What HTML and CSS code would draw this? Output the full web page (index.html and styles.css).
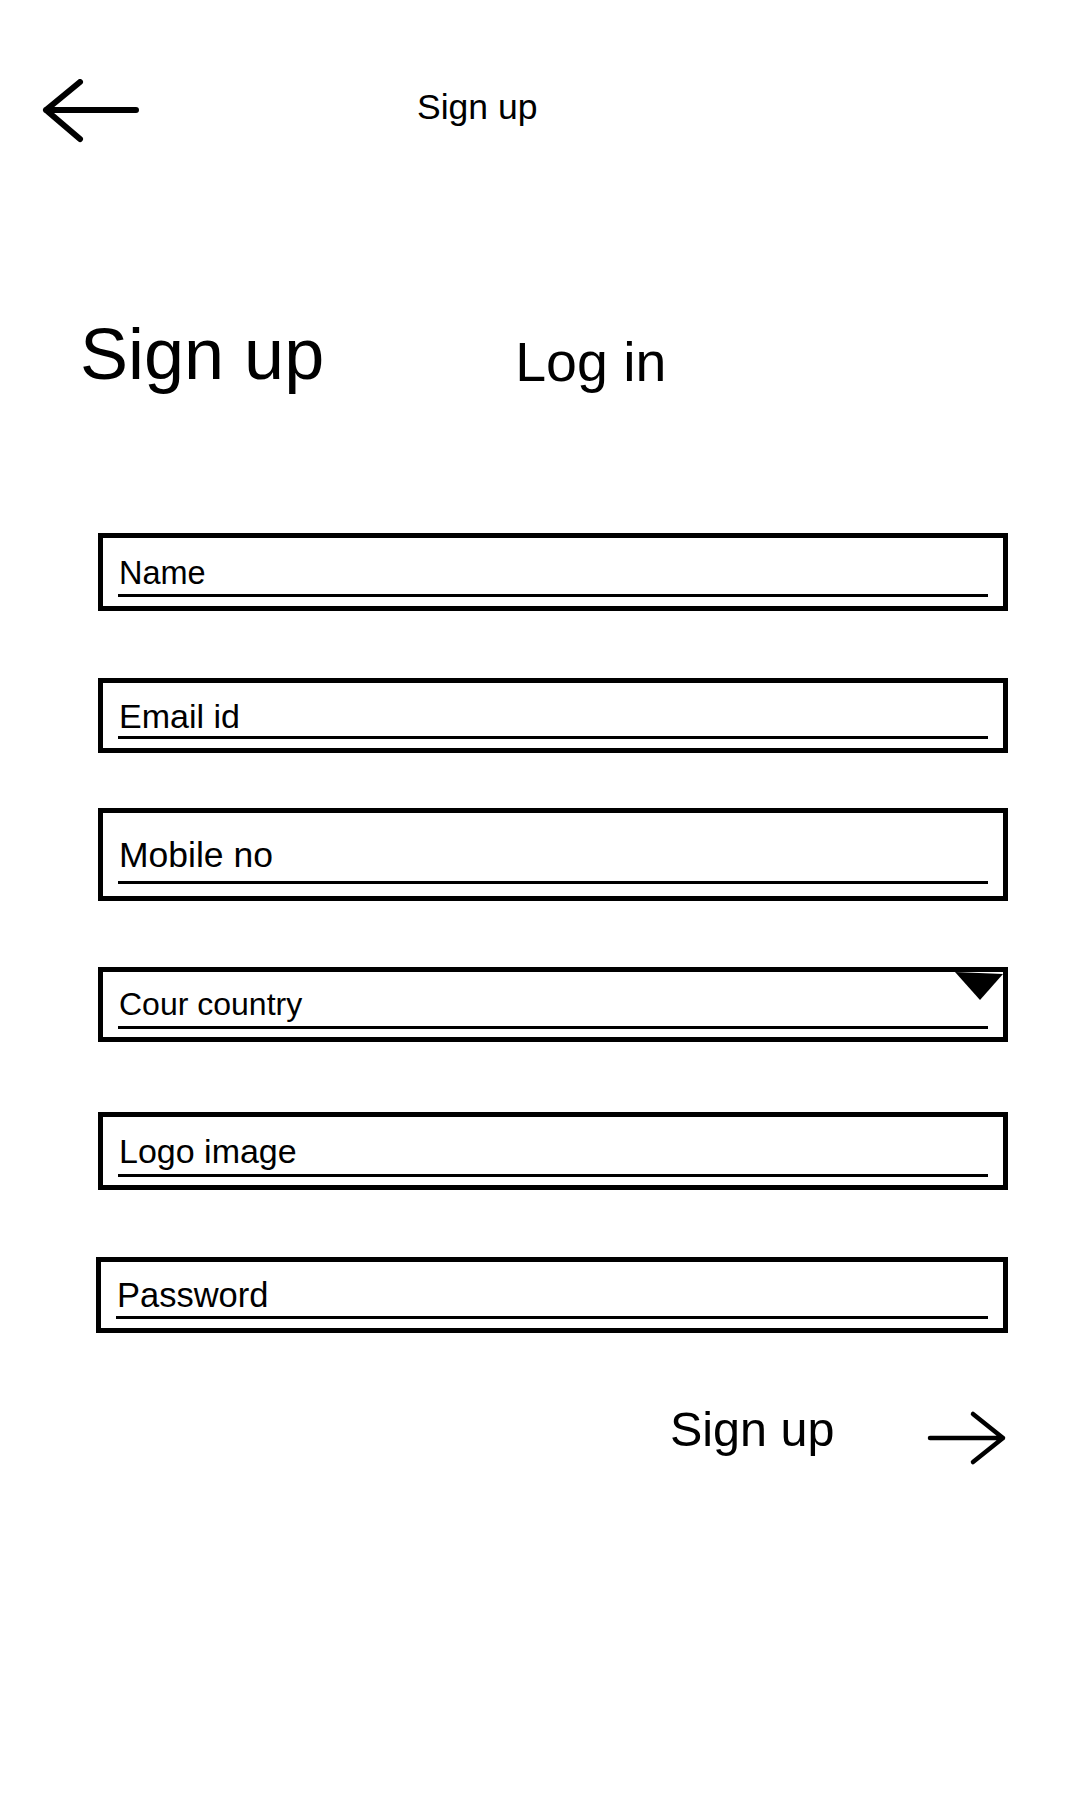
FILE: index.html
```html
<!DOCTYPE html>
<html lang="en">
<head>
<meta charset="utf-8">
<title>Sign up</title>
<link rel="stylesheet" href="styles.css">
</head>
<body>
<div class="screen">
  <header class="topbar">
    <svg class="back-icon" width="100" height="64" viewBox="0 0 100 64" aria-hidden="true">
      <path d="M40 3 L6 31 M6 31 L40 60 M6 31 L96 31" fill="none" stroke="#000" stroke-width="6" stroke-linecap="round" stroke-linejoin="round"/>
    </svg>
    <div class="topbar-title">Sign up</div>
  </header>

  <nav class="tabs">
    <div class="tab tab-active">Sign up</div>
    <div class="tab tab-other">Log in</div>
  </nav>

  <form class="form">
    <div class="field f-name"><div class="line">Name</div></div>
    <div class="field f-email"><div class="line">Email id</div></div>
    <div class="field f-mobile"><div class="line">Mobile no</div></div>
    <div class="field f-country">
      <div class="line">Cour country</div>
      <svg class="caret" width="48" height="30" viewBox="0 0 48 30" aria-hidden="true">
        <polygon points="0,0 48,2 25,28" fill="#000"/>
      </svg>
    </div>
    <div class="field f-logo"><div class="line">Logo image</div></div>
    <div class="field f-password"><div class="line">Password</div></div>
  </form>

  <div class="submit-row">
    <div class="submit-label">Sign up</div>
    <svg class="next-icon" width="82" height="56" viewBox="0 0 82 56" aria-hidden="true">
      <path d="M5 28 L78 28 M48 4 L78 28 L48 52" fill="none" stroke="#000" stroke-width="4.5" stroke-linecap="round" stroke-linejoin="round"/>
    </svg>
  </div>
</div>
</body>
</html>
```

FILE: styles.css
```css
* { box-sizing: border-box; }

html, body {
  margin: 0;
  padding: 0;
  background: #fff;
}

body {
  font-family: "Liberation Sans", Arial, sans-serif;
  color: #000;
}

.screen {
  width: 1080px;
  min-height: 1800px;
}

/* top bar */
.topbar {
  display: flex;
  align-items: flex-start;
  padding: 79px 0 0 40px;
  height: 143px;
}

.back-icon {
  display: block;
  flex: none;
}

.topbar-title {
  margin: 11px 0 0 277px;
  font-size: 35.5px;
  line-height: 35px;
}

/* tabs */
.tabs {
  display: flex;
  align-items: baseline;
  margin-top: 175px;
  padding-left: 80px;
  height: 72px;
}

.tab-active {
  font-size: 72px;
  line-height: 72px;
}

.tab-other {
  margin-left: 191px;
  font-size: 55.5px;
  line-height: 54px;
  transform: translateY(2px);
}

/* form */
.form {
  margin: 143px 0 0 98px;
  width: 910px;
  display: flex;
  flex-direction: column;
}

.field {
  position: relative;
  border: 5px solid #000;
  padding: 19px 15px 9px 15px;
}

.line {
  border-bottom: 3px solid #000;
  padding: 0 0 5px 1px;
  font-size: 32px;
  line-height: 32px;
  white-space: nowrap;
}

.f-name .line { padding-bottom: 5px; font-size: 32.5px; }

.f-email { margin-top: 67px; padding-top: 17px; padding-bottom: 9px; }
.f-email .line { padding-bottom: 4px; font-size: 34px; }

.f-mobile { margin-top: 55px; padding-top: 26px; padding-bottom: 12px; }
.f-mobile .line { padding-bottom: 9px; font-size: 35.5px; line-height: 33px; }

.f-country { margin-top: 66px; padding-top: 16px; padding-bottom: 8px; }
.f-country .line { padding-bottom: 6px; font-size: 32px; }

.f-logo { margin-top: 70px; padding-top: 18px; padding-bottom: 8px; }
.f-logo .line { padding-bottom: 7px; font-size: 34px; }

.f-password { margin: 67px 0 0 -2px; width: 912px; padding-top: 17px; padding-bottom: 9px; }
.f-password .line { padding-bottom: 5px; font-size: 34.5px; }

.caret {
  position: absolute;
  top: 0;
  right: 0;
  display: block;
}

/* submit row */
.submit-row {
  display: flex;
  align-items: flex-start;
  margin-top: 73px;
  padding-left: 670px;
}

.submit-label {
  font-size: 48.5px;
  line-height: 47px;
}

.next-icon {
  display: block;
  flex: none;
  margin: 4px 0 0 90px;
}
```
